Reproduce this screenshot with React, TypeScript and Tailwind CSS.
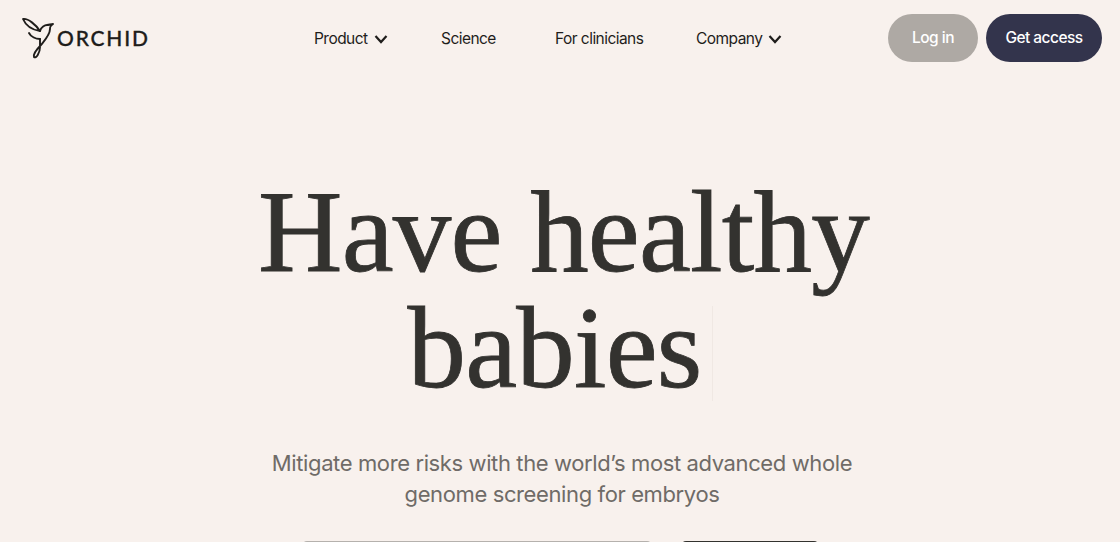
import React from 'react';

const Chevron = () => (
  <svg width="14" height="10" viewBox="0 0 14 10" fill="none" className="ml-[6px]">
    <path d="M1.5 2 L7 8 L12.5 2" stroke="#1f1d1b" strokeWidth="2.2" />
  </svg>
);

const Logo = () => (
  <svg width="34" height="42" viewBox="0 0 34 42" fill="none" stroke="#1f1d1b" strokeWidth="1.9" strokeLinecap="round" strokeLinejoin="round">
    <path d="M2 2 C7 1 15 8 19 14 C12 13 5 9 2 2 Z" />
    <path d="M8 16 C10 20 15 22 19 22" />
    <path d="M19 14 C20 10 24 8 26 8 C28 8 30 7 32 7 C29 9 29 10 29 12 C29 18 23 24 20 28 C15 33 12 37 13 40 C15 42 19 36 19 30 C19 27 19 25 19 22" />
  </svg>
);

const App: React.FC = () => {
  return (
    <div className="h-[542px] w-[1120px] overflow-hidden bg-[#f8f1ed] font-['Inter',sans-serif] text-[#1f1d1b]">
      {/* Nav */}
      <nav className="flex h-[76px] items-center justify-between pl-[21px] pr-[18px]">
        <div className="flex w-[130px] items-center">
          <Logo />
          <span className="mb-[2px] ml-[2px] text-[21px] font-medium leading-none tracking-[0.085em] font-['Lato',sans-serif] [-webkit-text-stroke:0.3px_#1f1d1b]">ORCHID</span>
        </div>
        <div className="ml-[163px] flex items-center pt-[1px] text-[15.5px] tracking-[-0.035em]">
          <a className="flex w-[127px] items-center">Product <Chevron /></a>
          <a className="w-[114px]">Science</a>
          <a className="w-[141px]">For clinicians</a>
          <a className="flex items-center">Company <Chevron /></a>
        </div>
        <div className="ml-auto flex items-center gap-2">
          <button className="h-12 w-[90px] rounded-3xl bg-[#aea9a4] text-[15.5px] font-medium tracking-[-0.035em] text-white">Log in</button>
          <button className="h-12 w-[116px] rounded-3xl bg-[#33344c] text-[15.5px] font-medium tracking-[-0.035em] text-white">Get access</button>
        </div>
      </nav>

      {/* Hero */}
      <section className="flex flex-col items-center pl-[4px] pt-[98px]">
        <h1 className="w-[700px] pl-[3px] text-center font-['Liberation_Serif',serif] text-[117px] leading-[116px] tracking-[-0.8px] text-[#33322f] [-webkit-text-stroke:0.8px_#33322f]">
          Have healthy
          <br />
          <span className="relative inline-block pr-[18px]">
            babies
            <span className="absolute right-[7px] top-[16px] h-[95px] w-px bg-[#f0e8e3]" />
          </span>
        </h1>
        <p className="mt-[42px] w-[600px] text-center text-[22px] leading-[31px] tracking-[-0.0175em] text-[#6f6b67]">
          Mitigate more risks with the world’s most advanced whole genome screening for embryos
        </p>
        <div className="mr-[3px] mt-[31px] flex items-start gap-[31px]">
          <div className="h-12 w-[348px] rounded-t-sm border-t border-[#b5b1ad]" />
          <div className="h-12 w-[136px] rounded-t-sm bg-[#33322f]" />
        </div>
      </section>
    </div>
  );
};

export default App;
